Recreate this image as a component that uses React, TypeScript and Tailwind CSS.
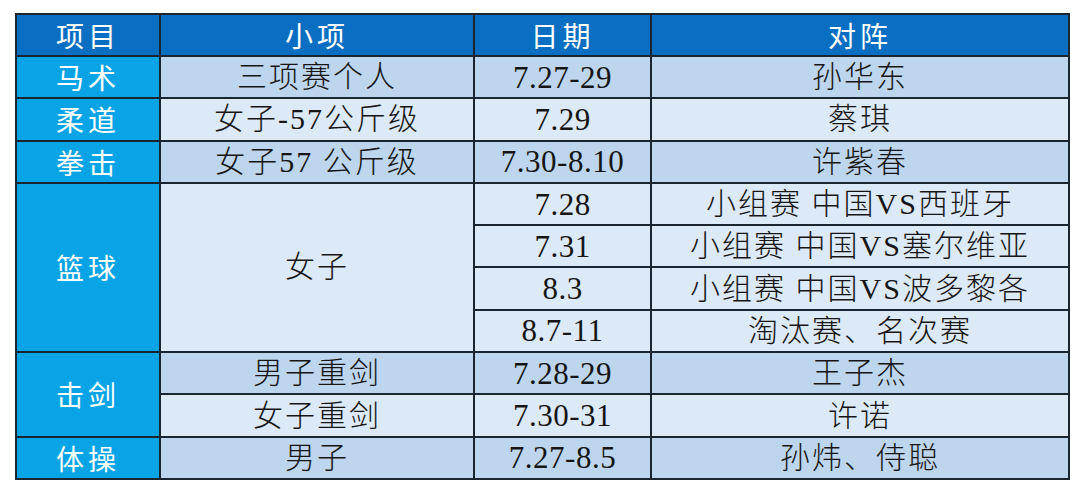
import React from 'react';

type Row = {
  sport?: { name: string; span: number };
  item?: { name: string; span: number };
  date: string;
  match: string;
  tone: 'dark' | 'light';
};

const rows: Row[] = [
  { sport: { name: '马术', span: 1 }, item: { name: '三项赛个人', span: 1 }, date: '7.27-29', match: '孙华东', tone: 'dark' },
  { sport: { name: '柔道', span: 1 }, item: { name: '女子-57公斤级', span: 1 }, date: '7.29', match: '蔡琪', tone: 'light' },
  { sport: { name: '拳击', span: 1 }, item: { name: '女子57 公斤级', span: 1 }, date: '7.30-8.10', match: '许紫春', tone: 'dark' },
  { sport: { name: '篮球', span: 4 }, item: { name: '女子', span: 4 }, date: '7.28', match: '小组赛 中国VS西班牙', tone: 'light' },
  { date: '7.31', match: '小组赛 中国VS塞尔维亚', tone: 'light' },
  { date: '8.3', match: '小组赛 中国VS波多黎各', tone: 'light' },
  { date: '8.7-11', match: '淘汰赛、名次赛', tone: 'light' },
  { sport: { name: '击剑', span: 2 }, item: { name: '男子重剑', span: 1 }, date: '7.28-29', match: '王子杰', tone: 'dark' },
  { item: { name: '女子重剑', span: 1 }, date: '7.30-31', match: '许诺', tone: 'light' },
  { sport: { name: '体操', span: 1 }, item: { name: '男子', span: 1 }, date: '7.27-8.5', match: '孙炜、侍聪', tone: 'dark' },
];

const cell = 'border-2 border-[#1b2530] text-center align-middle p-0';
const bodyText = "font-[family-name:'Liberation_Serif','Noto_Sans_CJK_SC',serif] text-[30px] leading-none text-[#151515] tracking-[2px] font-light";
const dateText = "font-[family-name:'Liberation_Serif',serif] text-[31px] leading-none text-[#151515] tracking-[0.5px]";
const whiteText = "font-[family-name:'Noto_Sans_CJK_SC',sans-serif] text-[28px] leading-none text-white tracking-[4px]";

export default function App() {
  return (
    <main className="min-h-screen bg-white pt-[13px] pl-[15px]">
      <table className="table-fixed border-collapse border-2 border-[#1b2530] w-[1053px]">
        <colgroup>
          <col className="w-[144px]" />
          <col className="w-[314px]" />
          <col className="w-[177px]" />
          <col className="w-[418px]" />
        </colgroup>
        <thead>
          <tr className="h-[42px] bg-[#0a6fc2]">
            <th className={`${cell} ${whiteText} font-normal`}>项目</th>
            <th className={`${cell} ${whiteText} font-normal`}>小项</th>
            <th className={`${cell} ${whiteText} font-normal`}>日期</th>
            <th className={`${cell} ${whiteText} font-normal`}>对阵</th>
          </tr>
        </thead>
        <tbody>
          {rows.map((r, i) => {
            const bg = r.tone === 'dark' ? 'bg-[#bed6ed]' : 'bg-[#dce9f6]';
            return (
              <tr key={i} className="h-[42.3px]">
                {r.sport && (
                  <td rowSpan={r.sport.span} className={`${cell} ${whiteText} bg-[#08a4e6]`}>
                    {r.sport.name}
                  </td>
                )}
                {r.item && (
                  <td rowSpan={r.item.span} className={`${cell} ${bodyText} ${bg}`}>
                    {r.item.name}
                  </td>
                )}
                <td className={`${cell} ${dateText} ${bg}`}>{r.date}</td>
                <td className={`${cell} ${bodyText} ${bg}`}>{r.match}</td>
              </tr>
            );
          })}
        </tbody>
      </table>
    </main>
  );
}
